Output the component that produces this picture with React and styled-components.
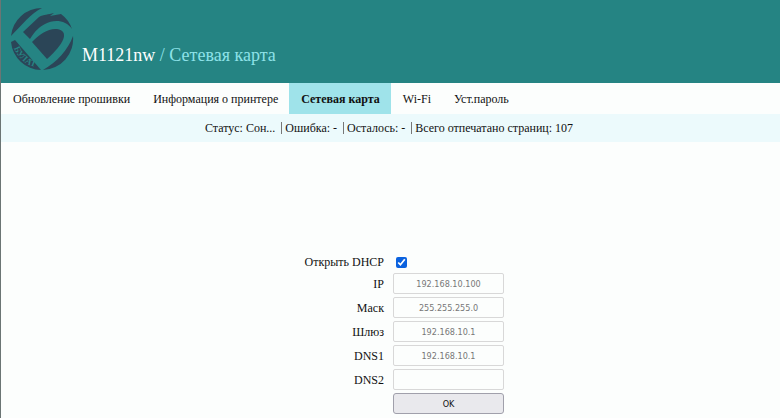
import React, { useState } from "react";
import styled, { createGlobalStyle } from "styled-components";

const GlobalStyle = createGlobalStyle`
  * {
    box-sizing: border-box;
  }

  body {
    margin: 0;
    background: #fcfefd;
    color: #111111;
    font: 12px/16px "Liberation Serif", serif;
  }
`;

const Page = styled.div`
  min-height: 100vh;
  border-left: 1px solid #6b7574;
`;

const Header = styled.header`
  display: flex;
  align-items: flex-end;
  gap: 8px;
  padding: 7px 9px 12px;
  background: #258483;
`;

const Logo = styled.svg`
  width: 64px;
  height: 64px;
  flex: none;
`;

const Title = styled.h1`
  margin: 0;
  color: #8de2e8;
  font-size: 18px;
  font-weight: normal;
  line-height: 32px;
`;

const Model = styled.span`
  color: #ffffff;
`;

const Nav = styled.nav`
  display: flex;
`;

const Tab = styled.a`
  padding: 8px 11px 7px 12px;
  color: #111111;
  text-decoration: none;
  background: ${(props) => (props.$active ? "#9fe3ea" : "transparent")};
  font-weight: ${(props) => (props.$active ? "bold" : "normal")};
`;

const StatusBar = styled.div`
  display: flex;
  justify-content: center;
  padding: 8px 0;
  background: #ecfafc;
  line-height: 12px;
`;

const StatusItem = styled.span`
  padding: 0 6px 0 3px;

  & + & {
    border-left: 1px solid #777777;
  }
`;

const Form = styled.form`
  display: grid;
  grid-template-columns: 1fr 1fr;
  align-items: center;
  gap: 3px 9px;
  padding: 112px 4px 4px 0;
`;

const Label = styled.label`
  justify-self: end;
`;

const Checkbox = styled.input`
  width: 11px;
  height: 11px;
  margin: 0 3px;
  accent-color: #0b62df;
`;

const Field = styled.input`
  width: 111px;
  height: 21px;
  padding: 0 4px;
  border: 1px solid #d8d8d8;
  border-radius: 2px;
  background: #fcfefd;
  color: #777777;
  font: 9px "DejaVu Sans Condensed", "DejaVu Sans", sans-serif;
  text-align: center;
`;

const Submit = styled.button`
  grid-column: 2;
  width: 111px;
  height: 21px;
  padding: 0;
  border: 1px solid #a0a0ab;
  border-radius: 3px;
  background: #e9e9ed;
  color: #111111;
  font: 9px "DejaVu Sans Condensed", "DejaVu Sans", sans-serif;
`;

const tabs = [
  "Обновление прошивки",
  "Информация о принтере",
  "Сетевая карта",
  "Wi-Fi",
  "Уст.пароль",
];

const status = [
  "Статус: Сон...",
  "Ошибка: -",
  "Осталось: -",
  "Всего отпечатано страниц: 107",
];

const fields = [
  { id: "ip", label: "IP", value: "192.168.10.100" },
  { id: "mask", label: "Маск", value: "255.255.255.0" },
  { id: "gateway", label: "Шлюз", value: "192.168.10.1" },
  { id: "dns1", label: "DNS1", value: "192.168.10.1" },
  { id: "dns2", label: "DNS2", value: "" },
];

const BrandLogo = () => (
  <Logo viewBox="0 0 64 64" role="img" aria-label="БУЛАТ">
    <g fill="#2b4557">
      <path d="M1 29 A31 31 0 0 1 32 1 C21 6 12 18 1 29 Z" />
      <path d="M13 25 L29 10 C34 7 38 8 44 6 L40 9 L51 7 A31 31 0 0 1 62 22 C56 13 44 12 35 17 C29 20 25 24 20 32 Z" />
      <path d="M22 35 C29 27 39 21 47 22 C60 24 54 37 37 52 Z" />
      <path d="M63 29 A31 31 0 0 1 33 63 C47 55 58 43 63 29 Z" />
      <path d="M1 35 L5 33 L31 63 A31 31 0 0 1 1 35 Z" />
    </g>
    <path id="logo-arc" d="M4 41 A31 31 0 0 0 31 61" fill="none" />
    <text fill="#258483" fontFamily="Liberation Serif, serif" fontSize="9" fontWeight="bold">
      <textPath href="#logo-arc">БУЛАТ</textPath>
    </text>
  </Logo>
);

const App = () => {
  const [dhcp, setDhcp] = useState(true);

  return (
    <Page>
      <GlobalStyle />
      <Header>
        <BrandLogo />
        <Title>
          <Model>M1121nw</Model> / Сетевая карта
        </Title>
      </Header>
      <Nav>
        {tabs.map((tab, index) => (
          <Tab key={tab} href="#" $active={index === 2}>
            {tab}
          </Tab>
        ))}
      </Nav>
      <StatusBar>
        {status.map((item) => (
          <StatusItem key={item}>{item}</StatusItem>
        ))}
      </StatusBar>
      <Form onSubmit={(event) => event.preventDefault()}>
        <Label htmlFor="dhcp">Открыть DHCP</Label>
        <Checkbox
          id="dhcp"
          type="checkbox"
          checked={dhcp}
          onChange={(event) => setDhcp(event.target.checked)}
        />
        {fields.map(({ id, label, value }) => (
          <React.Fragment key={id}>
            <Label htmlFor={id}>{label}</Label>
            <Field id={id} type="text" defaultValue={value} />
          </React.Fragment>
        ))}
        <Submit type="submit">OK</Submit>
      </Form>
    </Page>
  );
};

export default App;
